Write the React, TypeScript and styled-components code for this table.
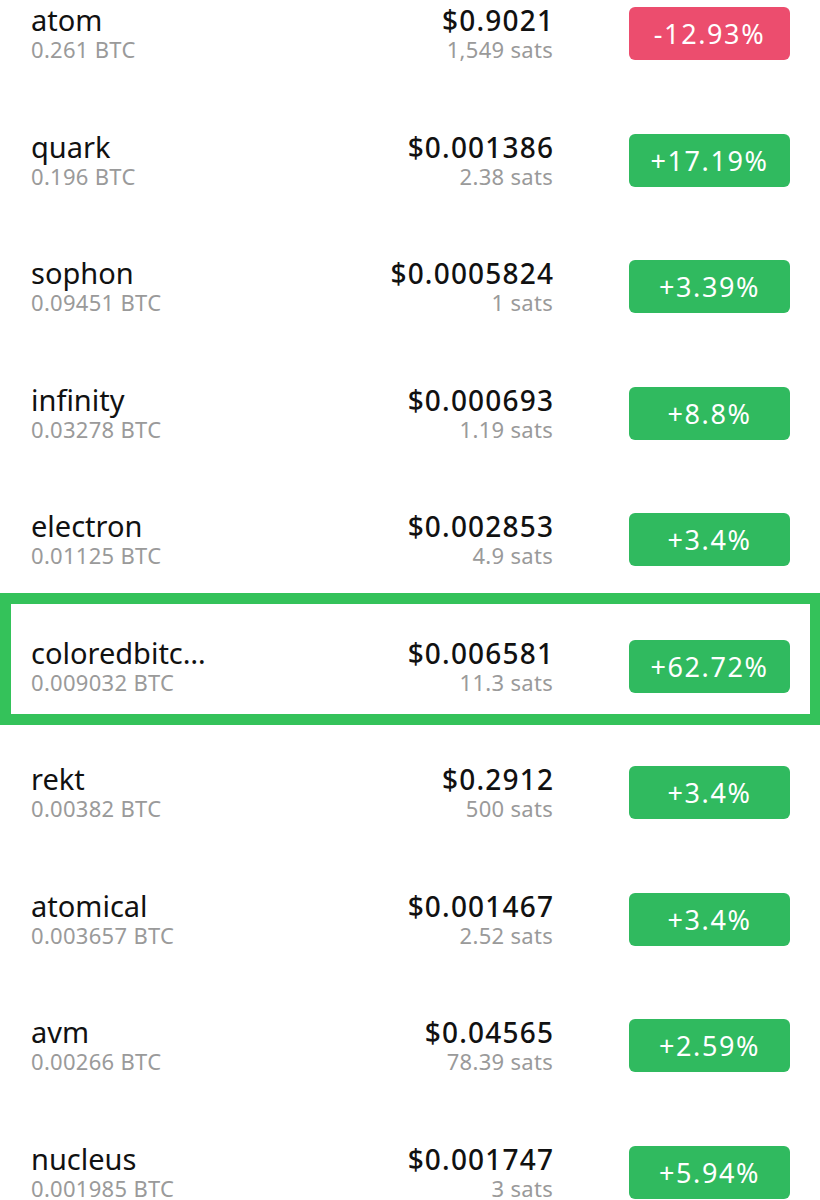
import React from "react";
import styled, { createGlobalStyle, css } from "styled-components";

const GlobalStyle = createGlobalStyle`
  html, body {
    margin: 0;
    padding: 0;
    background: #ffffff;
    overflow: hidden;
  }
  body {
    font-family: "Noto Sans", "Open Sans", Arial, sans-serif;
    -webkit-font-smoothing: antialiased;
  }
`;

type Ticker = {
  name: string;
  btc: string;
  price: string;
  sats: string;
  change: string;
  picked?: boolean;
};

const tickers: Ticker[] = [
  { name: "atom", btc: "0.261 BTC", price: "$0.9021", sats: "1,549 sats", change: "-12.93%" },
  { name: "quark", btc: "0.196 BTC", price: "$0.001386", sats: "2.38 sats", change: "+17.19%" },
  { name: "sophon", btc: "0.09451 BTC", price: "$0.0005824", sats: "1 sats", change: "+3.39%" },
  { name: "infinity", btc: "0.03278 BTC", price: "$0.000693", sats: "1.19 sats", change: "+8.8%" },
  { name: "electron", btc: "0.01125 BTC", price: "$0.002853", sats: "4.9 sats", change: "+3.4%" },
  { name: "coloredbitcoin", btc: "0.009032 BTC", price: "$0.006581", sats: "11.3 sats", change: "+62.72%", picked: true },
  { name: "rekt", btc: "0.00382 BTC", price: "$0.2912", sats: "500 sats", change: "+3.4%" },
  { name: "atomical", btc: "0.003657 BTC", price: "$0.001467", sats: "2.52 sats", change: "+3.4%" },
  { name: "avm", btc: "0.00266 BTC", price: "$0.04565", sats: "78.39 sats", change: "+2.59%" },
  { name: "nucleus", btc: "0.001985 BTC", price: "$0.001747", sats: "3 sats", change: "+5.94%" },
];

// list is scrolled a bit, first row sits partly above the top edge
const List = styled.div`
  margin-top: -30px;
  display: flex;
  flex-direction: column;
`;

const Row = styled.div<{ $picked?: boolean }>`
  position: relative;
  height: 126.5px;
  padding: 0 30px 0 31px;
  display: flex;
  align-items: center;
  box-sizing: border-box;

  ${(p) =>
    p.$picked &&
    css`
      &::after {
        content: "";
        position: absolute;
        left: 0;
        right: 0;
        top: -9.5px;
        bottom: 4.5px;
        border: 11px solid #34c25a;
        border-right-width: 10px;
        pointer-events: none;
      }
    `}
`;

const NameCol = styled.div`
  flex: 1;
  min-width: 0;
  display: flex;
  flex-direction: column;
`;

const PriceCol = styled.div`
  display: flex;
  flex-direction: column;
  align-items: flex-end;
  margin-right: 76px;
`;

const Title = styled.div<{ $long?: boolean }>`
  font-size: 29px;
  line-height: 32px;
  color: #111;
  white-space: nowrap;

  ${(p) =>
    p.$long &&
    css`
      max-width: 184px;
      overflow: hidden;
      text-overflow: ellipsis;
    `}
`;

const Price = styled.div`
  font-size: 28px;
  line-height: 32px;
  font-weight: 500;
  color: #111;
  letter-spacing: 1.2px;
  margin-right: -1.2px;
`;

const Sub = styled.div`
  font-size: 22px;
  line-height: 26px;
  color: #9a9a9a;
  letter-spacing: 0.3px;
`;

const Badge = styled.div<{ $down?: boolean }>`
  width: 161px;
  height: 53px;
  border-radius: 6px;
  background: ${(p) => (p.$down ? "#ec4d6e" : "#30ba5f")};
  color: #fff;
  font-size: 27px;
  letter-spacing: 1.6px;
  display: flex;
  align-items: center;
  justify-content: center;
  margin-top: 1px;
`;

export default function App() {
  return (
    <>
      <GlobalStyle />
      <List>
        {tickers.map((t) => (
          <Row key={t.name} $picked={t.picked}>
            <NameCol>
              <Title $long={t.name.length > 11}>{t.name}</Title>
              <Sub>{t.btc}</Sub>
            </NameCol>
            <PriceCol>
              <Price>{t.price}</Price>
              <Sub>{t.sats}</Sub>
            </PriceCol>
            <Badge $down={t.change.startsWith("-")}>{t.change}</Badge>
          </Row>
        ))}
      </List>
    </>
  );
}
